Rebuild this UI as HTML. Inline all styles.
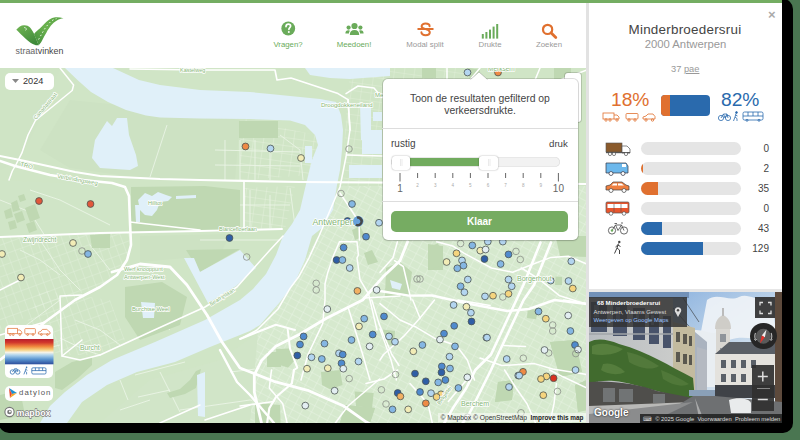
<!DOCTYPE html>
<html><head><meta charset="utf-8">
<style>
*{margin:0;padding:0;box-sizing:border-box}
html,body{width:800px;height:440px;overflow:hidden;background:#4a7651;font-family:"Liberation Sans",sans-serif}
#frame{position:absolute;left:-1px;top:-1px;width:794px;height:433.5px;background:#000;border-radius:10px}
#app{position:absolute;left:0;top:0;width:782px;height:423px;background:#fff;overflow:hidden}
#topbar{position:absolute;left:0;top:0;width:782px;height:3px;background:#74ad62}
#map{position:absolute;left:0;top:68px;width:587px;height:355px;background:#d5e7cd;overflow:hidden}
#map svg{position:absolute;left:0;top:0}
#header{position:absolute;left:0;top:3px;width:587px;height:65px;background:#fff}
.nav{position:absolute;text-align:center;font-size:7.8px;line-height:9px}
#panel{position:absolute;left:586px;top:3px;width:196px;height:420px;background:#fff;border-left:3px solid #e2e2e2}
.abs{position:absolute}
</style></head><body>
<div id="frame"></div>
<div id="app">
  <div id="map">
<svg width="587" height="355" viewBox="0 68 587 355">
<rect x="0" y="68" width="587" height="355" fill="#d0e5c6"/>
<path d="M0,68 L60,68 L40,120 L20,160 L0,170 Z" fill="#cfe4c5"/>
<path d="M70,100 L170,110 L240,120 L235,180 L140,178 L70,168 L40,150 Z" fill="#cde2c3"/>
<path d="M0,180 L120,186 L128,230 L0,236 Z" fill="#d0e5c7"/>
<path d="M140,236 L230,234 L220,255 L185,258 L140,262 Z" fill="#cde2c3"/>
<path d="M150,380 L220,360 L262,330 L300,330 L290,423 L100,423 Z" fill="#d1e5c8"/>
<path d="M30,190 L60,200 L90,215 L110,225" stroke="#eef6ea" stroke-width="0.8" fill="none"/>
<path d="M0,200 L30,212 L45,236" stroke="#eef6ea" stroke-width="0.8" fill="none"/>
<path d="M40,240 L60,270 L80,290" stroke="#eef6ea" stroke-width="0.8" fill="none"/>
<path d="M20,250 L40,260 L60,275" stroke="#eef6ea" stroke-width="0.8" fill="none"/>
<path d="M90,245 L110,270" stroke="#eef6ea" stroke-width="0.8" fill="none"/>
<path d="M60,300 L40,315 L20,330" stroke="#eef6ea" stroke-width="0.8" fill="none"/>
<path d="M167,125 L150,177" stroke="#eef6ea" stroke-width="0.8" fill="none"/>
<path d="M179,200 L180,230" stroke="#eef6ea" stroke-width="0.8" fill="none"/>
<path d="M225,140 L225,180" stroke="#eef6ea" stroke-width="0.8" fill="none"/>
<path d="M240,140 L240,180" stroke="#eef6ea" stroke-width="0.8" fill="none"/>
<path d="M255,140 L255,180" stroke="#eef6ea" stroke-width="0.8" fill="none"/>
<path d="M270,150 L270,180" stroke="#eef6ea" stroke-width="0.8" fill="none"/>
<path d="M215,150 L300,152" stroke="#eef6ea" stroke-width="0.8" fill="none"/>
<path d="M215,165 L300,166" stroke="#eef6ea" stroke-width="0.8" fill="none"/>
<path d="M280,135 L300,150 L303,180" stroke="#eef6ea" stroke-width="0.8" fill="none"/>
<path d="M200,240 L280,240" stroke="#eef6ea" stroke-width="0.8" fill="none"/>
<path d="M210,190 L210,228" stroke="#eef6ea" stroke-width="0.8" fill="none"/>
<path d="M230,190 L230,228" stroke="#eef6ea" stroke-width="0.8" fill="none"/>
<path d="M250,190 L250,228" stroke="#eef6ea" stroke-width="0.8" fill="none"/>
<path d="M270,195 L270,228" stroke="#eef6ea" stroke-width="0.8" fill="none"/>
<path d="M215,205 L290,205" stroke="#eef6ea" stroke-width="0.8" fill="none"/>
<path d="M290,188 L295,226" stroke="#eef6ea" stroke-width="0.8" fill="none"/>
<path d="M60,338 L85,350 L100,355" stroke="#eef6ea" stroke-width="0.8" fill="none"/>
<path d="M20,355 L60,345" stroke="#eef6ea" stroke-width="0.8" fill="none"/>
<path d="M75,320 L100,330 L120,345" stroke="#eef6ea" stroke-width="0.8" fill="none"/>
<path d="M170,330 L150,312" stroke="#eef6ea" stroke-width="0.8" fill="none"/>
<path d="M135,375 L185,362" stroke="#eef6ea" stroke-width="0.8" fill="none"/>
<path d="M138,397 L170,390" stroke="#eef6ea" stroke-width="0.8" fill="none"/>
<path d="M160,372 L180,412" stroke="#eef6ea" stroke-width="0.8" fill="none"/>
<path d="M120,380 L128,400" stroke="#eef6ea" stroke-width="0.8" fill="none"/>
<path d="M230,372 L290,365 L320,360" stroke="#eef6ea" stroke-width="0.8" fill="none"/>
<path d="M180,410 L250,400 L300,410" stroke="#eef6ea" stroke-width="0.8" fill="none"/>
<path d="M120,410 L150,400" stroke="#eef6ea" stroke-width="0.8" fill="none"/>
<path d="M300,410 L280,380 L260,395" stroke="#eef6ea" stroke-width="0.8" fill="none"/>
<defs><pattern id="g1" width="9" height="7" patternUnits="userSpaceOnUse" patternTransform="rotate(28)"><path d="M0,0 H9 M0,0 V7" stroke="#eaf4e4" stroke-width="0.9" fill="none"/></pattern><pattern id="g2" width="8" height="10" patternUnits="userSpaceOnUse" patternTransform="rotate(-20)"><path d="M0,0 H8 M0,0 V10" stroke="#eaf4e4" stroke-width="0.9" fill="none"/></pattern><pattern id="g3" width="10" height="8" patternUnits="userSpaceOnUse" patternTransform="rotate(8)"><path d="M0,0 H10 M0,0 V8" stroke="#e8f2e2" stroke-width="0.8" fill="none"/></pattern></defs>
<path d="M345,186 L587,186 L587,423 L250,423 L258,332 L280,302 L300,270 L318,236 L333,210 L340,186 Z" fill="#d6e9ce"/>
<path d="M345,186 L587,186 L587,423 L250,423 L258,332 L280,302 L300,270 L318,236 L333,210 L340,186 Z" fill="url(#g1)"/>
<path d="M240,118 L315,135 L318,145 L312,175 L240,180 Z" fill="url(#g3)"/>
<path d="M0,236 L130,232 L128,262 L100,287 L60,300 L0,330 Z" fill="url(#g2)" opacity="0.7"/>
<path d="M244,188 L295,186 L285,229 L244,231 Z" fill="url(#g3)"/>
<path d="M350,68 L470,68 L480,80 L382,80 L382,186 L343,186 L345,130 Z" fill="url(#g3)" opacity="0.8"/>
<path d="M40,290 L110,300 L125,340 L100,355 L60,355 L20,340 Z" fill="url(#g2)" opacity="0.7"/>
<path d="M239,121 L278,121 L278,138 L239,138 Z" fill="#bfd8b2"/>
<path d="M131,187 L205,186 L240,190 L240,232 L131,232 Z" fill="#bfd8b2"/>
<path d="M125,287 L162,282 L187,297 L180,325 L140,340 L125,317 Z" fill="#bfd8b2"/>
<path d="M186,250 L240,249 L200,272 Z" fill="#bfd8b2"/>
<path d="M167,393 L180,389 L190,380 L196,371 L201,369 L196,388 L185,394 L170,398 Z" fill="#bfd8b2"/>
<path d="M55,372 L72,362 L92,357 L92,365 L78,378 L62,390 L55,388 Z" fill="#bfd8b2"/>
<path d="M386,268 L400,262 L412,272 L409,296 L385,297 Z" fill="#bfd8b2"/>
<path d="M428,244 L443,246 L443,270 L428,270 Z" fill="#bfd8b2"/>
<path d="M550,342 L575,340 L582,372 L560,377 Z" fill="#bfd8b2"/>
<path d="M267,352 L281,352 L281,367 L267,367 Z" fill="#bfd8b2"/>
<path d="M255,405 L272,405 L270,423 L255,423 Z" fill="#bfd8b2"/>
<path d="M4,211 L11,208 L13,217 L6,219 Z" fill="#bfd8b2"/>
<path d="M11,203 L17,200 L20,210 L13,212 Z" fill="#bfd8b2"/>
<path d="M14,214 L22,211 L25,220 L17,223 Z" fill="#bfd8b2"/>
<path d="M25,208 L35,204 L40,218 L30,222 Z" fill="#bfd8b2"/>
<path d="M26,224 L34,221 L37,230 L29,233 Z" fill="#bfd8b2"/>
<path d="M8,222 L15,220 L17,228 L10,230 Z" fill="#bfd8b2"/>
<path d="M90,235 L110,234 L110,248 L92,248 Z" fill="#bfd8b2"/>
<path d="M18,196 L24,194 L26,200 L20,202 Z" fill="#bfd8b2"/>
<path d="M470,88 L500,85 L505,100 L480,105 Z" fill="#bfd8b2"/>
<path d="M540,85 L565,78 L580,90 L560,100 Z" fill="#bfd8b2"/>
<path d="M498,382 L514,380 L512,400 L495,402 Z" fill="#bfd8b2"/>
<path d="M345,405 L375,408 L370,423 L340,423 Z" fill="#bfd8b2"/>
<path d="M575,385 L587,380 L587,410 L578,412 Z" fill="#bfd8b2"/>
<path d="M422,68 L436,68 L436,78 L422,78 Z" fill="#bfd8b2"/>
<path d="M554,68 L571,68 L571,80 L554,80 Z" fill="#bfd8b2"/>
<path d="M468,68 L480,70 L478,80 L470,80 Z" fill="#bfd8b2"/>
<path d="M0,395 L20,390 L25,415 L0,420 Z" fill="#bfd8b2"/>
<path d="M384.4,289.8 L401.8,268 L408.3,294 Z" fill="#bfd8b2"/>
<path d="M428,247.6 L438,243.3 L444,260.7 L444,265 L428,270 Z" fill="#bfd8b2"/>
<path d="M555.5,236 L587,236 L587,257 L560,256 Z" fill="#bfd8b2"/>
<path d="M527.7,308.6 L538.4,310 L536,319.3 L527,318 Z" fill="#bfd8b2"/>
<path d="M555.5,276.6 L562,277 L562,285 L555,285 Z" fill="#bfd8b2"/>
<path d="M276,349 L290,348.6 L295,360 L288,367.7 L277,364 Z" fill="#bfd8b2"/>
<path d="M321,372 L340,370 L342.6,385 L330,389.2 L322,385 Z" fill="#bfd8b2"/>
<path d="M261.5,403.5 L280,405 L280.6,423 L261,423 Z" fill="#bfd8b2"/>
<path d="M354.6,391.6 L373.7,393 L372,408.3 L356,406 Z" fill="#bfd8b2"/>
<path d="M383,329.5 L395,331 L394,346 L384,344 Z" fill="#bfd8b2"/>
<path d="M550,342 L575,340 L582,372 L560,377 Z" fill="#bfd8b2"/>
<path d="M345,405 L375,408 L370,423 L340,423 Z" fill="#bfd8b2"/>
<path d="M498,382 L514,380 L512,400 L495,402 Z" fill="#bfd8b2"/>
<path d="M575,385 L587,380 L587,410 L578,412 Z" fill="#bfd8b2"/>
<path d="M422,68 L436,68 L436,78 L422,78 Z" fill="#bfd8b2"/>
<path d="M554,68 L571,68 L571,80 L554,80 Z" fill="#bfd8b2"/>
<path d="M468,68 L480,70 L478,80 L470,80 Z" fill="#bfd8b2"/>
<path d="M352,230 L360,226 L365,236 L355,240 Z" fill="#bfd8b2"/>
<path d="M364,253 L372,250 L378,262 L368,265 Z" fill="#bfd8b2"/>
<path d="M113,68 L126,74 L139,80 L160,85 L200,90 L250,92 L270,94 L290,96 L320,99 L336,102 L341,115 L343,130 L342,150 L340,170 L337,185 L333,210 L322,228 L312,236 L305,260 L295,282 L280,302 L260,325 L250,331 L210,347 L175,362 L137,372 L107,385 L82,402 L67,423 L40,423 L50,406 L65,392 L87,375 L112,360 L155,342 L205,320 L240,300 L253,289 L266,274 L276,255 L283,236 L292,224 L300,210 L307,180 L312,160 L318,145 L315,135 L305,125 L290,120.5 L250,119 L200,118.5 L160,117.5 L146,115.5 L126,110 L108,102 L91,92 L77.5,80 L65,68 Z" fill="#e0f0f9"/>
<path d="M107,121 L112,126 L117,118 L127,118 L129,135 L136,155 L138,166 L130,170 L100,168 L92,158 L95,140 L100,132 Z" fill="#e0f0f9"/>
<path d="M184,258 L194,258 L200,272 L240,250 L256,268 L236,286 L208,303 Z" fill="#e0f0f9"/>
<path d="M305,68 L390,68 L390,76 L350,79 L330,78 L310,75 Z" fill="#e0f0f9"/>
<path d="M305,146 L312,146 L312,163 L305,163 Z" fill="#e0f0f9"/>
<path d="M360,104 L371,104 L371,140 L361,140 Z" fill="#e0f0f9"/>
<path d="M373,112 L382,112 L382,121 L373,121 Z" fill="#e0f0f9"/>
<path d="M362,130 L382,130 L382,154 L362,154 Z" fill="#e0f0f9"/>
<path d="M349,165 L382,165 L382,178 L349,178 Z" fill="#e0f0f9"/>
<path d="M138,200 L145,193 L152,196 L158,192 L166,195 L172,197 L168,201 L160,202 L157,210 L152,216 L145,215 L140,210 Z" fill="#e0f0f9"/>
<path d="M176,196 L196,195 L196,198 L176,199 Z" fill="#e0f0f9"/>
<path d="M135,205 L140,205 L140,222 L136,222 Z" fill="#e0f0f9"/>
<path d="M141,302 L155,303 L154,318 L143,318 Z" fill="#e0f0f9"/>
<path d="M197,375 L205,372 L205,417 L198,416 Z" fill="#e0f0f9"/>
<path d="M390,280 L402,284 L400,290 L392,288 Z" fill="#e0f0f9"/>
<path d="M60,68 L73.6,85 L72.2,90.5 L35.4,120.5 L28,135 L21.8,153.2 L16.3,164 L12.3,171 L9,180" stroke="#ffffff" stroke-width="1.5" fill="none" stroke-linejoin="round" stroke-linecap="round"/>
<path d="M100,355 L150,332 L205,307 L237,287 L270,250 L283,236" stroke="#ffffff" stroke-width="1.5" fill="none" stroke-linejoin="round" stroke-linecap="round"/>
<path d="M100,355 L80,360 L62,356 L60,296 L82,295" stroke="#ffffff" stroke-width="1.5" fill="none" stroke-linejoin="round" stroke-linecap="round"/>
<path d="M62,356 L82,340" stroke="#ffffff" stroke-width="1.5" fill="none" stroke-linejoin="round" stroke-linecap="round"/>
<path d="M0,335 L45,322" stroke="#ffffff" stroke-width="1.5" fill="none" stroke-linejoin="round" stroke-linecap="round"/>
<path d="M348,99.6 L350,130 L346,157 L340,187 L325,222 L319,236 L309,257.8 L298.7,276.8 L290,288.4 L278,309 L257,330 L240,339" stroke="#ffffff" stroke-width="1.5" fill="none" stroke-linejoin="round" stroke-linecap="round"/>
<path d="M347,155 L382,156" stroke="#ffffff" stroke-width="1.5" fill="none" stroke-linejoin="round" stroke-linecap="round"/>
<path d="M346,93.6 L358,86 L374,88 L382,97.6" stroke="#ffffff" stroke-width="1.5" fill="none" stroke-linejoin="round" stroke-linecap="round"/>
<path d="M339.5,241.8 L357,241.8 L358.4,255 L357,257.8 L360,279.7 L368.6,294.2 L377,330" stroke="#ffffff" stroke-width="1.5" fill="none" stroke-linejoin="round" stroke-linecap="round"/>
<path d="M339.5,241.8 L333.7,255 L327.8,272.4 L325,284 L325,300 L322.7,323.6 L308,354.5 L301,380" stroke="#ffffff" stroke-width="1.5" fill="none" stroke-linejoin="round" stroke-linecap="round"/>
<path d="M364,298 L400,296" stroke="#ffffff" stroke-width="1.5" fill="none" stroke-linejoin="round" stroke-linecap="round"/>
<path d="M397.4,241.8 L393,257.8 L380,272.3" stroke="#ffffff" stroke-width="1.5" fill="none" stroke-linejoin="round" stroke-linecap="round"/>
<path d="M394.5,260.7 L403.3,266.5 L409,291 L411,300" stroke="#ffffff" stroke-width="1.5" fill="none" stroke-linejoin="round" stroke-linecap="round"/>
<path d="M436.7,241.8 L452.7,246 L464.3,253.4 L491.4,268 L512.7,272.3 L534,263.8 L551,257.4 L568.3,256.3 L587,264" stroke="#ffffff" stroke-width="1.5" fill="none" stroke-linejoin="round" stroke-linecap="round"/>
<path d="M521.3,268 L538.4,278.7 L559.7,295.8 L587,304.4" stroke="#ffffff" stroke-width="1.5" fill="none" stroke-linejoin="round" stroke-linecap="round"/>
<path d="M340,193 L350,208 L359,222 L359.5,240" stroke="#ffffff" stroke-width="1.5" fill="none" stroke-linejoin="round" stroke-linecap="round"/>
<path d="M480,68 L470,80" stroke="#ffffff" stroke-width="1.5" fill="none" stroke-linejoin="round" stroke-linecap="round"/>
<path d="M540,68 L535,80" stroke="#ffffff" stroke-width="1.5" fill="none" stroke-linejoin="round" stroke-linecap="round"/>
<path d="M447,68 L447,80" stroke="#ffffff" stroke-width="1.5" fill="none" stroke-linejoin="round" stroke-linecap="round"/>
<path d="M560,80 L587,70" stroke="#ffffff" stroke-width="1.5" fill="none" stroke-linejoin="round" stroke-linecap="round"/>
<path d="M205,420 L250,405" stroke="#ffffff" stroke-width="1.5" fill="none" stroke-linejoin="round" stroke-linecap="round"/>
<path d="M160,423 L200,405" stroke="#ffffff" stroke-width="1.5" fill="none" stroke-linejoin="round" stroke-linecap="round"/>
<path d="M0,290 L20,280" stroke="#ffffff" stroke-width="1.5" fill="none" stroke-linejoin="round" stroke-linecap="round"/>
<path d="M380,303.6 L400,320 L416.4,327.3 L434.5,338.2 L456.4,345.5 L467.3,360 L474.5,380" stroke="#ffffff" stroke-width="1.5" fill="none" stroke-linejoin="round" stroke-linecap="round"/>
<path d="M412.7,300 L420,318 L434.5,300" stroke="#ffffff" stroke-width="1.5" fill="none" stroke-linejoin="round" stroke-linecap="round"/>
<path d="M420,318 L403.6,336.4 L383.6,354.5 L380,360" stroke="#ffffff" stroke-width="1.5" fill="none" stroke-linejoin="round" stroke-linecap="round"/>
<path d="M380,329 L391,360 L396.4,380" stroke="#ffffff" stroke-width="1.5" fill="none" stroke-linejoin="round" stroke-linecap="round"/>
<path d="M458,300 L490,305.5" stroke="#ffffff" stroke-width="1.5" fill="none" stroke-linejoin="round" stroke-linecap="round"/>
<path d="M480,358 L501.8,365.5 L534.5,363.6 L552.7,369 L587,374.5" stroke="#ffffff" stroke-width="1.5" fill="none" stroke-linejoin="round" stroke-linecap="round"/>
<path d="M503.6,345.5 L525.5,346.4" stroke="#ffffff" stroke-width="1.5" fill="none" stroke-linejoin="round" stroke-linecap="round"/>
<path d="M563.6,300 L587,303.6" stroke="#ffffff" stroke-width="1.5" fill="none" stroke-linejoin="round" stroke-linecap="round"/>
<path d="M504.6,370 L516,388 L527,403.8 L536,424" stroke="#ffffff" stroke-width="1.5" fill="none" stroke-linejoin="round" stroke-linecap="round"/>
<path d="M410,383.5 L428,403.8 L432.5,424" stroke="#ffffff" stroke-width="1.5" fill="none" stroke-linejoin="round" stroke-linecap="round"/>
<path d="M549.6,370 L563,376.8 L587,388" stroke="#ffffff" stroke-width="1.5" fill="none" stroke-linejoin="round" stroke-linecap="round"/>
<path d="M556.4,383.5 L554,403.8 L549.6,424" stroke="#ffffff" stroke-width="1.5" fill="none" stroke-linejoin="round" stroke-linecap="round"/>
<path d="M467.4,379 L448.3,401.5" stroke="#ffffff" stroke-width="1.5" fill="none" stroke-linejoin="round" stroke-linecap="round"/>
<path d="M348,307 L362.7,354.5 L370,380" stroke="#ffffff" stroke-width="1.5" fill="none" stroke-linejoin="round" stroke-linecap="round"/>
<path d="M371.8,300 L379,323.6 L391.8,354.5 L399,365.5" stroke="#ffffff" stroke-width="1.5" fill="none" stroke-linejoin="round" stroke-linecap="round"/>
<path d="M379.6,379 L348,406 L334.6,424" stroke="#ffffff" stroke-width="1.5" fill="none" stroke-linejoin="round" stroke-linecap="round"/>
<path d="M366,383.5 L384,379 L397.7,370" stroke="#ffffff" stroke-width="1.5" fill="none" stroke-linejoin="round" stroke-linecap="round"/>
<path d="M240,406 L273.8,401.5" stroke="#ffffff" stroke-width="1.5" fill="none" stroke-linejoin="round" stroke-linecap="round"/>
<path d="M271.5,370 L269.3,388 L282.8,403.8 L287.3,424" stroke="#ffffff" stroke-width="1.5" fill="none" stroke-linejoin="round" stroke-linecap="round"/>
<path d="M0,156 L25,161 L75,172 L100,176 L160,179 L200,180 L300,182 L587,184" stroke="#ffffff" stroke-width="2.2" fill="none" stroke-linejoin="round" stroke-linecap="round"/>
<path d="M0,161 L15,166 L50,175 L82,180 L112,183 L125,187 L129,196 L130,222 L131,245 L127,260 L117,275 L100,287 L75,300 L45,322 L30,335 L10,352 L0,360" stroke="#ffffff" stroke-width="2.6" fill="none" stroke-linejoin="round" stroke-linecap="round"/>
<path d="M0,237 L100,233 L200,231 L282,229" stroke="#ffffff" stroke-width="2.0" fill="none" stroke-linejoin="round" stroke-linecap="round"/>
<path d="M112,272 L140,264 L170,267 L187,285 L207,315 L222,342 L240,368 L273.8,381.3 L307.6,390.3 L343.6,406 L366,421.8 L370,424" stroke="#ffffff" stroke-width="2.8" fill="none" stroke-linejoin="round" stroke-linecap="round"/>
<path d="M240,339 L275.8,324.8 L295,330" stroke="#ffffff" stroke-width="2.0" fill="none" stroke-linejoin="round" stroke-linecap="round"/>
<path d="M261.5,423 L254.3,392 L254.3,374.9 L261.5,360.6 L275.8,346.3 L299.7,334.3 L326.4,318.2 L362.7,300 L383,276.8 L400,260.7 L407.6,241.8" stroke="#ffffff" stroke-width="2.8" fill="none" stroke-linejoin="round" stroke-linecap="round"/>
<path d="M294,370 L291.8,383.5 L276,397 L269.3,408.3 L267,424" stroke="#ffffff" stroke-width="2.2" fill="none" stroke-linejoin="round" stroke-linecap="round"/>
<path d="M287.7,329.5 L290,348.6 L297.3,367.7 L294,370" stroke="#ffffff" stroke-width="2.0" fill="none" stroke-linejoin="round" stroke-linecap="round"/>
<path d="M380,291 L409,295.6 L432,295.5 L470,304 L507.3,311 L529,309 L554.5,300 L587,304" stroke="#ffffff" stroke-width="2.4" fill="none" stroke-linejoin="round" stroke-linecap="round"/>
<path d="M540.5,242.4 L523.4,285 L516.4,300 L491,354.5 L475.3,370 L466.3,388 L452.8,408.3 L443.8,424" stroke="#ffffff" stroke-width="2.6" fill="none" stroke-linejoin="round" stroke-linecap="round"/>
<path d="M551,242.4 L534,285 L523.6,300 L498,354.5 L491,370 L477.6,397 L468.6,415 L462,424" stroke="#ffffff" stroke-width="2.6" fill="none" stroke-linejoin="round" stroke-linecap="round"/>
<path d="M130,222 L200,230" stroke="#ffffff" stroke-width="1.6" fill="none" stroke-linejoin="round" stroke-linecap="round"/>
<path d="M244,181 L244,231" stroke="#ffffff" stroke-width="1.6" fill="none" stroke-linejoin="round" stroke-linecap="round"/>
<path d="M220,350 L237,382 L250,395 L274,423" stroke="#ffffff" stroke-width="2.4" fill="none" stroke-linejoin="round" stroke-linecap="round"/>
<path d="M130,69 L200,70 L275,70 L277,80 L291,78 L338,93.6 L348,99.6 L350,130" stroke="#ffffff" stroke-width="1.6" fill="none" stroke-linejoin="round" stroke-linecap="round"/>
<circle cx="39" cy="201" r="3.4" fill="#e2573a" stroke="#4d5553" stroke-width="0.8"/>
<circle cx="90.5" cy="204" r="3.4" fill="#e2573a" stroke="#4d5553" stroke-width="0.8"/>
<circle cx="73" cy="243" r="3.4" fill="#f2ecb6" stroke="#4d5553" stroke-width="0.8"/>
<circle cx="82" cy="251" r="3.3" fill="none" stroke="#8a8f88" stroke-width="0.8"/>
<circle cx="88" cy="254" r="3.4" fill="#84b6e3" stroke="#4d5553" stroke-width="0.8"/>
<circle cx="2" cy="254" r="3.4" fill="#f2ecb6" stroke="#4d5553" stroke-width="0.8"/>
<circle cx="21" cy="277.5" r="3.4" fill="#f2ecb6" stroke="#4d5553" stroke-width="0.8"/>
<circle cx="245.5" cy="146.5" r="3.4" fill="#ee8a45" stroke="#4d5553" stroke-width="0.8"/>
<circle cx="270.5" cy="148.5" r="3.4" fill="#b3d5f0" stroke="#4d5553" stroke-width="0.8"/>
<circle cx="301" cy="158" r="3.4" fill="#f2ecb6" stroke="#4d5553" stroke-width="0.8"/>
<circle cx="349" cy="149" r="3.3" fill="none" stroke="#8a8f88" stroke-width="0.8"/>
<circle cx="229.5" cy="238" r="3.4" fill="#2f5ea6" stroke="#4d5553" stroke-width="0.8"/>
<circle cx="246.7" cy="257" r="3.3" fill="none" stroke="#8a8f88" stroke-width="0.8"/>
<circle cx="467.5" cy="72.5" r="3.4" fill="#b3d5f0" stroke="#4d5553" stroke-width="0.8"/>
<circle cx="498" cy="72.5" r="3.4" fill="#ee8a45" stroke="#4d5553" stroke-width="0.8"/>
<circle cx="341" cy="193.5" r="3.3" fill="none" stroke="#8a8f88" stroke-width="0.8"/>
<circle cx="352" cy="204" r="3.4" fill="#84b6e3" stroke="#4d5553" stroke-width="0.8"/>
<circle cx="347.5" cy="221" r="3.4" fill="#2f5ea6" stroke="#4d5553" stroke-width="0.8"/>
<circle cx="379" cy="222.75" r="3.4" fill="#b3d5f0" stroke="#4d5553" stroke-width="0.8"/>
<circle cx="366" cy="236.7" r="3.4" fill="#4f8ace" stroke="#4d5553" stroke-width="0.8"/>
<circle cx="343.6" cy="247.6" r="3.4" fill="#4f8ace" stroke="#4d5553" stroke-width="0.8"/>
<circle cx="336.6" cy="260" r="3.4" fill="#2f5ea6" stroke="#4d5553" stroke-width="0.8"/>
<circle cx="342.4" cy="260" r="3.4" fill="#84b6e3" stroke="#4d5553" stroke-width="0.8"/>
<circle cx="349.7" cy="268" r="3.4" fill="#b3d5f0" stroke="#4d5553" stroke-width="0.8"/>
<circle cx="357.4" cy="290.9" r="3.4" fill="#f2b062" stroke="#4d5553" stroke-width="0.8"/>
<circle cx="376.6" cy="289.9" r="3.4" fill="#e3eef2" stroke="#4d5553" stroke-width="0.8"/>
<circle cx="316.2" cy="283.3" r="3.3" fill="none" stroke="#8a8f88" stroke-width="0.8"/>
<circle cx="316.2" cy="290" r="3.3" fill="none" stroke="#8a8f88" stroke-width="0.8"/>
<circle cx="460.6" cy="243.5" r="3.3" fill="none" stroke="#8a8f88" stroke-width="0.8"/>
<circle cx="472.3" cy="245.4" r="3.4" fill="#84b6e3" stroke="#4d5553" stroke-width="0.8"/>
<circle cx="487.8" cy="241.6" r="3.4" fill="#b3d5f0" stroke="#4d5553" stroke-width="0.8"/>
<circle cx="502.8" cy="241.6" r="3.4" fill="#b3d5f0" stroke="#4d5553" stroke-width="0.8"/>
<circle cx="456.5" cy="253.3" r="3.4" fill="#f5d47e" stroke="#4d5553" stroke-width="0.8"/>
<circle cx="480.3" cy="250.6" r="3.4" fill="#f2ecb6" stroke="#4d5553" stroke-width="0.8"/>
<circle cx="485.6" cy="249.5" r="3.4" fill="#e3eef2" stroke="#4d5553" stroke-width="0.8"/>
<circle cx="508.5" cy="254.4" r="3.4" fill="#4f8ace" stroke="#4d5553" stroke-width="0.8"/>
<circle cx="516" cy="251.4" r="3.3" fill="none" stroke="#8a8f88" stroke-width="0.8"/>
<circle cx="520.3" cy="259.5" r="3.3" fill="none" stroke="#8a8f88" stroke-width="0.8"/>
<circle cx="484.5" cy="259" r="3.4" fill="#2f5ea6" stroke="#4d5553" stroke-width="0.8"/>
<circle cx="446.6" cy="262" r="3.4" fill="#f2ecb6" stroke="#4d5553" stroke-width="0.8"/>
<circle cx="462" cy="260.4" r="3.4" fill="#b3d5f0" stroke="#4d5553" stroke-width="0.8"/>
<circle cx="463.5" cy="265.6" r="3.4" fill="#84b6e3" stroke="#4d5553" stroke-width="0.8"/>
<circle cx="457.3" cy="268.3" r="3.4" fill="#84b6e3" stroke="#4d5553" stroke-width="0.8"/>
<circle cx="500.6" cy="264" r="3.4" fill="#84b6e3" stroke="#4d5553" stroke-width="0.8"/>
<circle cx="571.3" cy="261.3" r="3.4" fill="#b3d5f0" stroke="#4d5553" stroke-width="0.8"/>
<circle cx="467.8" cy="279.5" r="3.4" fill="#b3d5f0" stroke="#4d5553" stroke-width="0.8"/>
<circle cx="460.6" cy="286.3" r="3.4" fill="#84b6e3" stroke="#4d5553" stroke-width="0.8"/>
<circle cx="464.4" cy="292.3" r="3.4" fill="#b3d5f0" stroke="#4d5553" stroke-width="0.8"/>
<circle cx="508.5" cy="279.5" r="3.4" fill="#b3d5f0" stroke="#4d5553" stroke-width="0.8"/>
<circle cx="511.7" cy="286.3" r="3.4" fill="#b3d5f0" stroke="#4d5553" stroke-width="0.8"/>
<circle cx="485" cy="296.4" r="3.4" fill="#b3d5f0" stroke="#4d5553" stroke-width="0.8"/>
<circle cx="493" cy="295.7" r="3.4" fill="#f5d47e" stroke="#4d5553" stroke-width="0.8"/>
<circle cx="508.5" cy="293.8" r="3.4" fill="#f5d47e" stroke="#4d5553" stroke-width="0.8"/>
<circle cx="502.8" cy="297" r="3.3" fill="none" stroke="#8a8f88" stroke-width="0.8"/>
<circle cx="550.7" cy="280.6" r="3.4" fill="#b3d5f0" stroke="#4d5553" stroke-width="0.8"/>
<circle cx="568.5" cy="281" r="3.4" fill="#b3d5f0" stroke="#4d5553" stroke-width="0.8"/>
<circle cx="572.8" cy="288.5" r="3.4" fill="#f5d47e" stroke="#4d5553" stroke-width="0.8"/>
<circle cx="417" cy="279" r="3.3" fill="none" stroke="#8a8f88" stroke-width="0.8"/>
<circle cx="420" cy="279" r="3.3" fill="none" stroke="#8a8f88" stroke-width="0.8"/>
<circle cx="327.3" cy="309.1" r="3.4" fill="#e3eef2" stroke="#4d5553" stroke-width="0.8"/>
<circle cx="364.2" cy="318.7" r="3.4" fill="#84b6e3" stroke="#4d5553" stroke-width="0.8"/>
<circle cx="384" cy="316.4" r="3.4" fill="#4f8ace" stroke="#4d5553" stroke-width="0.8"/>
<circle cx="359" cy="326.4" r="3.4" fill="#f2ecb6" stroke="#4d5553" stroke-width="0.8"/>
<circle cx="372.7" cy="334.5" r="3.4" fill="#4f8ace" stroke="#4d5553" stroke-width="0.8"/>
<circle cx="389" cy="336.4" r="3.4" fill="#b3d5f0" stroke="#4d5553" stroke-width="0.8"/>
<circle cx="395" cy="341.8" r="3.4" fill="#b3d5f0" stroke="#4d5553" stroke-width="0.8"/>
<circle cx="369.6" cy="346.4" r="3.4" fill="#e3eef2" stroke="#4d5553" stroke-width="0.8"/>
<circle cx="351.5" cy="340" r="3.4" fill="#84b6e3" stroke="#4d5553" stroke-width="0.8"/>
<circle cx="303.6" cy="336.4" r="3.4" fill="#4f8ace" stroke="#4d5553" stroke-width="0.8"/>
<circle cx="300" cy="344.5" r="3.4" fill="#4f8ace" stroke="#4d5553" stroke-width="0.8"/>
<circle cx="297.3" cy="355.5" r="3.4" fill="#2f5ea6" stroke="#4d5553" stroke-width="0.8"/>
<circle cx="311.5" cy="357.3" r="3.4" fill="#b3d5f0" stroke="#4d5553" stroke-width="0.8"/>
<circle cx="321.8" cy="359" r="3.4" fill="#84b6e3" stroke="#4d5553" stroke-width="0.8"/>
<circle cx="324.5" cy="343.6" r="3.4" fill="#84b6e3" stroke="#4d5553" stroke-width="0.8"/>
<circle cx="339" cy="353.3" r="3.4" fill="#b3d5f0" stroke="#4d5553" stroke-width="0.8"/>
<circle cx="342.7" cy="354.5" r="3.4" fill="#4f8ace" stroke="#4d5553" stroke-width="0.8"/>
<circle cx="341.5" cy="363.3" r="3.4" fill="#4f8ace" stroke="#4d5553" stroke-width="0.8"/>
<circle cx="343.3" cy="368.7" r="3.4" fill="#e3eef2" stroke="#4d5553" stroke-width="0.8"/>
<circle cx="327.8" cy="368.2" r="3.4" fill="#f2ecb6" stroke="#4d5553" stroke-width="0.8"/>
<circle cx="307" cy="368.7" r="3.4" fill="#f2ecb6" stroke="#4d5553" stroke-width="0.8"/>
<circle cx="358.5" cy="361.5" r="3.4" fill="#b3d5f0" stroke="#4d5553" stroke-width="0.8"/>
<circle cx="395.5" cy="374.5" r="3.3" fill="none" stroke="#8a8f88" stroke-width="0.8"/>
<circle cx="453.6" cy="305" r="3.4" fill="#b3d5f0" stroke="#4d5553" stroke-width="0.8"/>
<circle cx="466.4" cy="306.7" r="3.4" fill="#f2ecb6" stroke="#4d5553" stroke-width="0.8"/>
<circle cx="470.9" cy="312.7" r="3.4" fill="#b3d5f0" stroke="#4d5553" stroke-width="0.8"/>
<circle cx="471.5" cy="321.5" r="3.4" fill="#2f5ea6" stroke="#4d5553" stroke-width="0.8"/>
<circle cx="454.2" cy="325.8" r="3.4" fill="#4f8ace" stroke="#4d5553" stroke-width="0.8"/>
<circle cx="444" cy="333.6" r="3.4" fill="#4f8ace" stroke="#4d5553" stroke-width="0.8"/>
<circle cx="440" cy="339.6" r="3.4" fill="#e3eef2" stroke="#4d5553" stroke-width="0.8"/>
<circle cx="486.4" cy="337.6" r="3.4" fill="#b3d5f0" stroke="#4d5553" stroke-width="0.8"/>
<circle cx="422.4" cy="345" r="3.4" fill="#84b6e3" stroke="#4d5553" stroke-width="0.8"/>
<circle cx="413.3" cy="351.3" r="3.4" fill="#f2ecb6" stroke="#4d5553" stroke-width="0.8"/>
<circle cx="455" cy="346.4" r="3.4" fill="#84b6e3" stroke="#4d5553" stroke-width="0.8"/>
<circle cx="449.5" cy="356.7" r="3.4" fill="#b3d5f0" stroke="#4d5553" stroke-width="0.8"/>
<circle cx="441.8" cy="366.4" r="3.4" fill="#4f8ace" stroke="#4d5553" stroke-width="0.8"/>
<circle cx="450" cy="368.5" r="3.4" fill="#84b6e3" stroke="#4d5553" stroke-width="0.8"/>
<circle cx="441.5" cy="372.4" r="3.4" fill="#2f5ea6" stroke="#4d5553" stroke-width="0.8"/>
<circle cx="415" cy="373.6" r="3.4" fill="#2f5ea6" stroke="#4d5553" stroke-width="0.8"/>
<circle cx="467.3" cy="377.3" r="3.4" fill="#e3eef2" stroke="#4d5553" stroke-width="0.8"/>
<circle cx="538.5" cy="311.5" r="3.4" fill="#84b6e3" stroke="#4d5553" stroke-width="0.8"/>
<circle cx="545.8" cy="318.7" r="3.4" fill="#f5d47e" stroke="#4d5553" stroke-width="0.8"/>
<circle cx="552.7" cy="325" r="3.3" fill="none" stroke="#8a8f88" stroke-width="0.8"/>
<circle cx="552.7" cy="331" r="3.3" fill="none" stroke="#8a8f88" stroke-width="0.8"/>
<circle cx="568.2" cy="315.5" r="3.4" fill="#e3eef2" stroke="#4d5553" stroke-width="0.8"/>
<circle cx="570.4" cy="331" r="3.4" fill="#84b6e3" stroke="#4d5553" stroke-width="0.8"/>
<circle cx="575" cy="345" r="3.4" fill="#4f8ace" stroke="#4d5553" stroke-width="0.8"/>
<circle cx="578" cy="349.6" r="3.4" fill="#e3eef2" stroke="#4d5553" stroke-width="0.8"/>
<circle cx="575.8" cy="353.6" r="3.3" fill="none" stroke="#8a8f88" stroke-width="0.8"/>
<circle cx="548.7" cy="353" r="3.3" fill="none" stroke="#8a8f88" stroke-width="0.8"/>
<circle cx="544.5" cy="350" r="3.4" fill="#e3eef2" stroke="#4d5553" stroke-width="0.8"/>
<circle cx="487" cy="337.6" r="3.4" fill="#b3d5f0" stroke="#4d5553" stroke-width="0.8"/>
<circle cx="506.7" cy="359" r="3.4" fill="#b3d5f0" stroke="#4d5553" stroke-width="0.8"/>
<circle cx="523.3" cy="358.2" r="3.3" fill="none" stroke="#8a8f88" stroke-width="0.8"/>
<circle cx="523" cy="371.8" r="3.4" fill="#ee8a45" stroke="#4d5553" stroke-width="0.8"/>
<circle cx="518.2" cy="375.5" r="3.4" fill="#b3d5f0" stroke="#4d5553" stroke-width="0.8"/>
<circle cx="575.5" cy="370" r="3.4" fill="#b3d5f0" stroke="#4d5553" stroke-width="0.8"/>
<circle cx="546.4" cy="376.4" r="3.4" fill="#f5d47e" stroke="#4d5553" stroke-width="0.8"/>
<circle cx="541" cy="379" r="3.4" fill="#f5d47e" stroke="#4d5553" stroke-width="0.8"/>
<circle cx="553.6" cy="378.2" r="3.4" fill="#d8321f" stroke="#4d5553" stroke-width="0.8"/>
<circle cx="334.6" cy="390.7" r="3.4" fill="#e3eef2" stroke="#4d5553" stroke-width="0.8"/>
<circle cx="305.3" cy="405.6" r="3.4" fill="#e3eef2" stroke="#4d5553" stroke-width="0.8"/>
<circle cx="349.2" cy="378.6" r="3.3" fill="none" stroke="#8a8f88" stroke-width="0.8"/>
<circle cx="381.4" cy="389.8" r="3.3" fill="none" stroke="#8a8f88" stroke-width="0.8"/>
<circle cx="386" cy="404" r="3.3" fill="none" stroke="#8a8f88" stroke-width="0.8"/>
<circle cx="397.7" cy="393" r="3.4" fill="#2f5ea6" stroke="#4d5553" stroke-width="0.8"/>
<circle cx="400.4" cy="396.4" r="3.4" fill="#f2b062" stroke="#4d5553" stroke-width="0.8"/>
<circle cx="392.5" cy="409.4" r="3.4" fill="#84b6e3" stroke="#4d5553" stroke-width="0.8"/>
<circle cx="408.2" cy="409.4" r="3.4" fill="#f2ecb6" stroke="#4d5553" stroke-width="0.8"/>
<circle cx="438.2" cy="382.4" r="3.4" fill="#84b6e3" stroke="#4d5553" stroke-width="0.8"/>
<circle cx="445.4" cy="380" r="3.4" fill="#4f8ace" stroke="#4d5553" stroke-width="0.8"/>
<circle cx="425.8" cy="381.3" r="3.4" fill="#2f5ea6" stroke="#4d5553" stroke-width="0.8"/>
<circle cx="458.4" cy="388" r="3.4" fill="#84b6e3" stroke="#4d5553" stroke-width="0.8"/>
<circle cx="420" cy="392" r="3.4" fill="#4f8ace" stroke="#4d5553" stroke-width="0.8"/>
<circle cx="431" cy="393.2" r="3.4" fill="#b3d5f0" stroke="#4d5553" stroke-width="0.8"/>
<circle cx="441" cy="394.3" r="3.4" fill="#f5d47e" stroke="#4d5553" stroke-width="0.8"/>
<circle cx="436.6" cy="397" r="3.4" fill="#f5d47e" stroke="#4d5553" stroke-width="0.8"/>
<circle cx="425.8" cy="403.3" r="3.4" fill="#ee8a45" stroke="#4d5553" stroke-width="0.8"/>
<circle cx="509" cy="387" r="3.4" fill="#b3d5f0" stroke="#4d5553" stroke-width="0.8"/>
<circle cx="519.2" cy="375.6" r="3.4" fill="#b3d5f0" stroke="#4d5553" stroke-width="0.8"/>
<circle cx="543.3" cy="395.2" r="3.4" fill="#f5d47e" stroke="#4d5553" stroke-width="0.8"/>
<circle cx="557.5" cy="391.4" r="3.3" fill="none" stroke="#8a8f88" stroke-width="0.8"/>
<circle cx="521" cy="412.8" r="3.3" fill="none" stroke="#8a8f88" stroke-width="0.8"/>
<circle cx="467.4" cy="417.3" r="3.3" fill="none" stroke="#8a8f88" stroke-width="0.8"/>
<text x="180" y="71.5" font-family="Liberation Sans" font-size="5.5" fill="#84b574" stroke="#fff" stroke-width="1.6" paint-order="stroke" stroke-linejoin="round" text-anchor="start">Kastelweg</text>
<text x="36" y="120" font-family="Liberation Sans" font-size="5.5" fill="#84b574" stroke="#fff" stroke-width="1.6" paint-order="stroke" stroke-linejoin="round" text-anchor="start" transform="rotate(-50 36 120)">Canadastraat</text>
<text x="20" y="166" font-family="Liberation Sans" font-size="6" fill="#84b574" stroke="#fff" stroke-width="1.6" paint-order="stroke" stroke-linejoin="round" text-anchor="start" transform="rotate(14 20 166)">TRO</text>
<text x="57" y="178" font-family="Liberation Sans" font-size="5.8" fill="#84b574" stroke="#fff" stroke-width="1.6" paint-order="stroke" stroke-linejoin="round" text-anchor="start" transform="rotate(10 57 178)">Verbindingsweg</text>
<text x="321" y="107" font-family="Liberation Sans" font-size="6" fill="#84b574" stroke="#fff" stroke-width="1.6" paint-order="stroke" stroke-linejoin="round" text-anchor="start">Droogdokkeneiland</text>
<text x="375" y="97" font-family="Liberation Sans" font-size="6" fill="#84b574" stroke="#fff" stroke-width="1.6" paint-order="stroke" stroke-linejoin="round" text-anchor="start">Me</text>
<text x="488" y="71" font-family="Liberation Sans" font-size="6.5" fill="#84b574" stroke="#fff" stroke-width="1.6" paint-order="stroke" stroke-linejoin="round" text-anchor="start">Merksem</text>
<text x="148" y="205" font-family="Liberation Sans" font-size="5.5" fill="#84b574" stroke="#fff" stroke-width="1.6" paint-order="stroke" stroke-linejoin="round" text-anchor="start">Hilltot</text>
<text x="219" y="231" font-family="Liberation Sans" font-size="5.5" fill="#84b574" stroke="#fff" stroke-width="1.6" paint-order="stroke" stroke-linejoin="round" text-anchor="start">Blancefloerlaan</text>
<text x="23" y="242" font-family="Liberation Sans" font-size="6.5" fill="#84b574" stroke="#fff" stroke-width="1.6" paint-order="stroke" stroke-linejoin="round" text-anchor="start">Zwijndrecht</text>
<text x="124" y="271" font-family="Liberation Sans" font-size="5.5" fill="#84b574" stroke="#fff" stroke-width="1.6" paint-order="stroke" stroke-linejoin="round" text-anchor="start">Werf knooppunt</text>
<text x="124" y="279" font-family="Liberation Sans" font-size="5.5" fill="#84b574" stroke="#fff" stroke-width="1.6" paint-order="stroke" stroke-linejoin="round" text-anchor="start">Antwerpen-West</text>
<text x="132" y="311" font-family="Liberation Sans" font-size="5.8" fill="#84b574" stroke="#fff" stroke-width="1.6" paint-order="stroke" stroke-linejoin="round" text-anchor="start">Burchtse Weel</text>
<text x="211" y="306" font-family="Liberation Sans" font-size="5.5" fill="#84b574" stroke="#fff" stroke-width="1.6" paint-order="stroke" stroke-linejoin="round" text-anchor="start" transform="rotate(-32 211 306)">Beatrijslaan</text>
<text x="80" y="350" font-family="Liberation Sans" font-size="6.8" fill="#84b574" stroke="#fff" stroke-width="1.6" paint-order="stroke" stroke-linejoin="round" text-anchor="start">Burcht</text>
<text x="312.5" y="224.5" font-family="Liberation Sans" font-size="8.8" fill="#84b574" stroke="#fff" stroke-width="1.6" paint-order="stroke" stroke-linejoin="round" text-anchor="start">Antwerpen</text>
<text x="517" y="281" font-family="Liberation Sans" font-size="7" fill="#84b574" stroke="#fff" stroke-width="1.6" paint-order="stroke" stroke-linejoin="round" text-anchor="start">Borgerhout</text>
<text x="461" y="406" font-family="Liberation Sans" font-size="7" fill="#84b574" stroke="#fff" stroke-width="1.6" paint-order="stroke" stroke-linejoin="round" text-anchor="start">Berchem</text>
<text x="440" y="405" font-family="Liberation Sans" font-size="5.5" fill="#84b574" stroke="#fff" stroke-width="1.6" paint-order="stroke" stroke-linejoin="round" text-anchor="start" transform="rotate(-55 440 405)">Belgiëlei</text>
<circle cx="358.3" cy="221.3" r="5.2" fill="#69a2da"/><path d="M356.5,216.6 A5,5 0 1 1 355.2,225.6 L356.6,223.8 A2.6,2.6 0 1 0 357.4,218.9 Z" fill="#45484b"/>
</svg>
  </div>
  <!-- year selector -->
  <div class="abs" style="left:5px;top:73px;width:49px;height:17px;background:#fff;border-radius:5px"></div>
  <svg class="abs" style="left:11px;top:78px" width="9" height="6" viewBox="0 0 9 6"><path d="M1,1 H8 L4.5,5 Z" fill="#888"/></svg>
  <div class="abs" style="left:23px;top:76px;font-size:9.2px;color:#333;line-height:10px">2024</div>
  <!-- map nav control partly hidden -->
  <div class="abs" style="left:564.5px;top:73px;width:16.5px;height:48.5px;background:#fff;border-radius:3px;box-shadow:0 0 0 1px rgba(0,0,0,0.15)"></div>
  <!-- popup -->
  <div class="abs" style="left:382.5px;top:79px;width:195px;height:161px;background:#fff;border-radius:5px;box-shadow:0 0 0 1px rgba(0,0,0,0.13),0 1px 2px rgba(0,0,0,0.12)"></div>
  <svg class="abs" style="left:470px;top:71px" width="18" height="10" viewBox="0 0 18 10"><path d="M0,9 L9,1 L18,9" stroke="rgba(0,0,0,0.18)" stroke-width="1" fill="#fff"/><rect x="0" y="8.6" width="18" height="1.4" fill="#fff"/></svg>
  <div class="abs" style="left:382px;top:93px;width:196px;text-align:center;font-size:10.4px;color:#444;line-height:11.5px">Toon de resultaten gefilterd op<br>verkeersdrukte.</div>
  <div class="abs" style="left:382px;top:128px;width:196px;height:1px;background:#ddd"></div>
  <div class="abs" style="left:391px;top:138px;font-size:10px;color:#444;line-height:11px">rustig</div>
  <div class="abs" style="left:549px;top:138px;font-size:9.7px;color:#444;line-height:11px">druk</div>
  <div class="abs" style="left:391px;top:157px;width:169px;height:10px;border-radius:5px;background:#f2f2f2;box-shadow:inset 0 0 0 0.6px #ddd"></div>
  <div class="abs" style="left:403px;top:158px;width:85px;height:8px;background:#71ab5e"></div>
  <div class="abs" style="left:391.5px;top:155.5px;width:18px;height:14px;border-radius:3px;background:#fff;box-shadow:0 0 1.5px rgba(0,0,0,0.45)"></div>
  <div class="abs" style="left:479px;top:155.5px;width:19px;height:14px;border-radius:3px;background:#fff;box-shadow:0 0 1.5px rgba(0,0,0,0.45)"></div>
  <svg class="abs" style="left:391px;top:155px" width="110" height="15" viewBox="0 0 110 15"><path d="M9.5,4 V11 M11,4 V11 M97.5,4 V11 M99,4 V11" stroke="#ddd" stroke-width="0.6"/></svg>
  <svg class="abs" style="left:390px;top:171px" width="180" height="25" viewBox="0 0 180 25">
    <g stroke="#555" stroke-width="0.9">
      <path d="M10,2 V10.5"/><path d="M27.6,2 V7"/><path d="M45.2,2 V7"/><path d="M62.8,2 V7"/><path d="M80.4,2 V7"/><path d="M98,2 V7"/><path d="M115.6,2 V7"/><path d="M133.2,2 V7"/><path d="M150.8,2 V7"/><path d="M168.4,2 V10.5"/>
    </g>
    <g font-family="Liberation Sans" font-size="4.6" fill="#aaa" text-anchor="middle">
      <text x="27.6" y="15.5">2</text><text x="45.2" y="15.5">3</text><text x="62.8" y="15.5">4</text><text x="80.4" y="15.5">5</text><text x="98" y="15.5">6</text><text x="115.6" y="15.5">7</text><text x="133.2" y="15.5">8</text><text x="150.8" y="15.5">9</text>
    </g>
    <g font-family="Liberation Sans" font-size="10" fill="#666" text-anchor="middle">
      <text x="10" y="21.3">1</text><text x="168.4" y="21.3">10</text>
    </g>
  </svg>
  <div class="abs" style="left:382px;top:201px;width:196px;height:1px;background:#ddd"></div>
  <div class="abs" style="left:391px;top:210.5px;width:177px;height:21px;border-radius:5px;background:#76ac62;color:#fff;font-size:10px;font-weight:700;text-align:center;line-height:21px">Klaar</div>
  <!-- legend -->
  <div class="abs" style="left:4.8px;top:324.5px;width:48.5px;height:53px;background:#fff;border-radius:5px"></div>
  <svg class="abs" style="left:4.8px;top:324px" width="49" height="54" viewBox="0 0 49 54">
    <defs><linearGradient id="leg" x1="0" y1="0" x2="0" y2="1">
      <stop offset="0" stop-color="#b71c2c"/><stop offset="0.14" stop-color="#d2382c"/><stop offset="0.3" stop-color="#f08a3f"/><stop offset="0.43" stop-color="#f6d07f"/><stop offset="0.53" stop-color="#f6f3e6"/><stop offset="0.63" stop-color="#b3d6ee"/><stop offset="0.8" stop-color="#5a95d0"/><stop offset="1" stop-color="#2c4c9b"/>
    </linearGradient></defs>
    <rect x="0" y="15" width="48.5" height="25.3" fill="url(#leg)"/>
    <g fill="none" stroke="#e0702f" stroke-width="0.7">
      <rect x="2.8" y="4.3" width="9.6" height="5.4"/><path d="M12.4,6 H15 L16.8,8 V9.7 H12.4"/><circle cx="5.2" cy="10.6" r="0.9"/><circle cx="8.2" cy="10.6" r="0.9"/><circle cx="14.8" cy="10.6" r="0.9"/>
      <rect x="19.8" y="4.6" width="10.6" height="5.3" rx="0.8"/><circle cx="22.6" cy="10.6" r="0.9"/><circle cx="28" cy="10.6" r="0.9"/>
      <path d="M33.4,10 V8.2 L35.8,7.4 L37.4,5.4 H41.8 L44,7.4 L45,8 V10 Z"/><circle cx="36.4" cy="10.6" r="0.9"/><circle cx="42.4" cy="10.6" r="0.9"/>
    </g>
    <g fill="none" stroke="#2a6aad" stroke-width="0.75">
      <circle cx="7.4" cy="48" r="2.2"/><circle cx="12.8" cy="48" r="2.2"/><path d="M7.4,48 L9.6,44.8 H12 L12.8,48 M9.6,44.8 L11,48"/>
      <path d="M21.2,44.2 L20.2,47 L21.6,48.3 V50.4 M20.2,47 L18.9,50.4 M20.6,45.4 L22.4,46.3"/>
      <rect x="26.8" y="43.8" width="14.2" height="6.2" rx="1.2"/><path d="M26.8,46.6 H41 M30.4,43.8 V46.6 M34,43.8 V46.6 M37.6,43.8 V46.6"/>
    </g>
    <circle cx="21.6" cy="43.2" r="0.8" fill="#2a6aad"/>
  </svg>
  <div class="abs" style="left:4.8px;top:385.5px;width:48.5px;height:15px;background:#fff;border-radius:5px"></div>
  <svg class="abs" style="left:8px;top:387px" width="10" height="12" viewBox="0 0 10 12"><path d="M1,1 L9,6 L4,7 Z" fill="#1c8fd0"/><path d="M1,1 L4,7 L2,11 Z" fill="#e8492f"/><path d="M4,7 L9,6 L2,11 Z" fill="#f5a623"/></svg>
  <div class="abs" style="left:19px;top:388px;font-size:7.8px;color:#555;line-height:10px;letter-spacing:1.05px">datylon</div>
  <!-- mapbox logo -->
  <svg class="abs" style="left:3px;top:406px" width="50" height="13" viewBox="0 0 50 13">
    <circle cx="6.5" cy="6" r="4.6" fill="#fff" stroke="#777" stroke-width="1.1"/>
    <circle cx="6.5" cy="6" r="2.3" fill="#777"/><circle cx="6.9" cy="5.6" r="1" fill="#fff"/>
    <text x="13.5" y="9.6" font-family="Liberation Sans" font-weight="700" font-size="9.4" fill="#fff" stroke="#777" stroke-width="1.3" paint-order="stroke" stroke-linejoin="round" textLength="34" lengthAdjust="spacingAndGlyphs">mapbox</text>
  </svg>
  <!-- attribution -->
  <div class="abs" style="left:438px;top:413px;width:149px;height:9px;background:rgba(255,255,255,0.5)"></div>
  <div class="abs" style="left:440.5px;top:413.5px;font-size:6.7px;color:#333;line-height:8px;white-space:nowrap">© Mapbox © OpenStreetMap <b style="font-size:6.4px;color:#222">&nbsp;Improve this map</b></div>

  <div id="header">
    <svg class="abs" style="left:0;top:-3px" width="80" height="66" viewBox="0 0 80 66">
      <defs>
        <linearGradient id="lg1" x1="0" y1="0" x2="0.6" y2="1">
          <stop offset="0" stop-color="#72b654"/><stop offset="1" stop-color="#3f8a3a"/>
        </linearGradient>
        <linearGradient id="lg2" x1="0" y1="1" x2="1" y2="0">
          <stop offset="0" stop-color="#3f8c3b"/><stop offset="0.5" stop-color="#6bb24f"/><stop offset="1" stop-color="#5aa446"/>
        </linearGradient>
      </defs>
      <path d="M16.3,29.8 C18.5,27 21,25.3 24,25.2 C26.5,25.1 28.5,25.8 29.8,27.2 C31.5,29 33,31.5 34.2,34 L38.7,45.3 C36,45.6 33,44.6 30.5,42.8 C27,40.2 24,37 21.7,34.9 C19.5,32.9 17.8,31.2 16.3,29.8 Z" fill="url(#lg1)"/>
      <path d="M34,34 C36,31.5 37.8,30 39.5,28.7 C42,26.5 44,23.8 46.5,21.7 C49,19.6 51.5,18 54.2,17.5 C57.5,17 60.5,17.6 63.5,18.2 C61,18.6 59,19.2 57.3,20.2 C54.5,21.8 52.5,23.6 51,25.6 C49,28.3 47.5,30.5 46.5,32.5 C45,35 43.8,37.3 42.6,39.5 C41.5,41.8 40.2,43.8 38.7,45.3 Z" fill="url(#lg2)"/>
      <path d="M38.6,39.5 C40.5,36 42.5,32.5 44.6,29 C47,25.5 49.5,22.5 52,20.6 C53.5,19.6 55,19 56.5,18.6" stroke="#f4faee" stroke-width="0.95" stroke-dasharray="1.5 2.4" fill="none"/>
      <path d="M24.2,27.6 A1.6,1.6 0 0 1 25.6,30.4" stroke="#fff" stroke-width="0.8" fill="none"/>
      <text x="15.6" y="53.6" font-family="Liberation Sans" font-size="8.7" fill="#666" textLength="47.8" lengthAdjust="spacingAndGlyphs">straat<tspan fill="#444">vinken</tspan></text>
    </svg>
    <!-- nav icons -->
    <svg class="abs" style="left:281px;top:18px" width="15" height="15" viewBox="0 0 15 15">
      <circle cx="7.25" cy="7.5" r="6.9" fill="#6aab5a"/>
      <path d="M5,5.6 C5,3.9 6.1,3.1 7.3,3.1 C8.6,3.1 9.6,3.9 9.6,5.1 C9.6,6.5 7.9,6.7 7.9,8.3" stroke="#fff" stroke-width="1.7" fill="none" stroke-linecap="round"/>
      <circle cx="7.8" cy="11" r="1" fill="#fff"/>
    </svg>
    <div class="abs nav" style="left:253px;top:37px;width:70px;color:#6aab5a">Vragen?</div>
    <svg class="abs" style="left:345px;top:18px" width="19" height="15" viewBox="0 0 19 15">
      <circle cx="9.5" cy="5" r="3.1" fill="#6aab5a"/>
      <circle cx="3.6" cy="6.6" r="2.1" fill="#6aab5a"/>
      <circle cx="15.4" cy="6.6" r="2.1" fill="#6aab5a"/>
      <path d="M4.8,14 C4.8,10.5 6.5,9 9.5,9 C12.5,9 14.2,10.5 14.2,14 Z" fill="#6aab5a"/>
      <path d="M0.4,12.5 C0.4,10.2 1.5,9.3 3.3,9.3 C4.2,9.3 4.6,9.5 5,9.8 C4.2,10.8 4,11.5 4,12.5 Z" fill="#6aab5a"/>
      <path d="M18.6,12.5 C18.6,10.2 17.5,9.3 15.7,9.3 C14.8,9.3 14.4,9.5 14,9.8 C14.8,10.8 15,11.5 15,12.5 Z" fill="#6aab5a"/>
    </svg>
    <div class="abs nav" style="left:319px;top:37px;width:70px;color:#6aab5a">Meedoen!</div>
    <svg class="abs" style="left:416px;top:18px" width="19" height="17" viewBox="0 0 19 17">
      <path d="M13.6,5.2 C13.6,3.6 11.9,2.6 9.6,2.6 C7.2,2.6 5.6,3.6 5.6,5.3 C5.6,6.9 7.3,7.5 9.6,8.1 C12,8.7 13.8,9.4 13.8,11.3 C13.8,13.1 12,14.2 9.6,14.2 C7.1,14.2 5.4,13.1 5.4,11.3" stroke="#e0702f" stroke-width="2" fill="none" stroke-linecap="round"/>
      <rect x="1.5" y="7" width="16" height="2" fill="#e0702f"/>
    </svg>
    <div class="abs nav" style="left:390px;top:37px;width:70px;color:#999">Modal split</div>
    <svg class="abs" style="left:481px;top:20px" width="19" height="17" viewBox="0 0 19 17">
      <rect x="0.8" y="11" width="2" height="4.6" fill="#6aab5a"/>
      <rect x="4.4" y="9" width="2" height="6.6" fill="#6aab5a"/>
      <rect x="8" y="6.6" width="2" height="9" fill="#6aab5a"/>
      <rect x="11.6" y="3.6" width="2" height="12" fill="#6aab5a"/>
      <rect x="15.2" y="1" width="2" height="14.6" fill="#6aab5a"/>
    </svg>
    <div class="abs nav" style="left:455px;top:37px;width:70px;color:#999">Drukte</div>
    <svg class="abs" style="left:541px;top:20px" width="17" height="17" viewBox="0 0 17 17">
      <circle cx="6.6" cy="6.4" r="4.6" stroke="#e0702f" stroke-width="2.2" fill="none"/>
      <path d="M10,9.8 L14.8,14.6" stroke="#e0702f" stroke-width="2.8" stroke-linecap="round"/>
    </svg>
    <div class="abs nav" style="left:514px;top:37px;width:70px;color:#999">Zoeken</div>
  </div>

  <div id="topbar"></div>
  <div id="panel"></div>
  <div class="abs" style="left:768px;top:8px;font-size:13px;color:#aaa;font-weight:700;line-height:13px">&#215;</div>
  <div class="abs" style="left:587px;top:22px;width:196px;text-align:center;font-size:13.4px;letter-spacing:0.25px;color:#444;line-height:16px">Minderbroedersrui</div>
  <div class="abs" style="left:588px;top:38px;width:195px;text-align:center;font-size:11.3px;color:#999;line-height:13px">2000 Antwerpen</div>
  <div class="abs" style="left:671px;top:64px;font-size:9.3px;color:#999;line-height:11px">37 <span style="text-decoration:underline">pae</span></div>
  <div class="abs" style="left:611px;top:88.5px;font-size:19.2px;color:#e0702f;line-height:21px">18%</div>
  <div class="abs" style="left:721px;top:88.5px;font-size:19.2px;color:#2a6aad;line-height:21px">82%</div>
  <div class="abs" style="left:661px;top:95px;width:49px;height:21px;border-radius:4px;background:#2a6aad;overflow:hidden"><div style="width:9px;height:21px;background:#e0702f"></div></div>
  <!-- small icons under 18% -->
  <svg class="abs" style="left:602px;top:112px" width="55" height="10" viewBox="0 0 55 10">
    <g fill="none" stroke="#e0702f" stroke-width="0.8">
      <rect x="1" y="1" width="11" height="6"/><path d="M12,3 H15 L17,5 V7 H12"/><circle cx="4" cy="8" r="1.2"/><circle cx="8" cy="8" r="1.2"/><circle cx="15" cy="8" r="1.2"/>
      <rect x="24" y="1.5" width="12" height="5.5" rx="1"/><circle cx="27" cy="8" r="1.2"/><circle cx="33" cy="8" r="1.2"/>
      <path d="M41,7 V5 L44,4 L46,2 H51 L53,4.5 V7 Z"/><circle cx="44" cy="8" r="1.2"/><circle cx="50.5" cy="8" r="1.2"/>
    </g>
  </svg>
  <svg class="abs" style="left:717px;top:111px" width="48" height="11" viewBox="0 0 48 11">
    <g fill="none" stroke="#2a6aad" stroke-width="0.8">
      <circle cx="4" cy="7" r="2.6"/><circle cx="11" cy="7" r="2.6"/><path d="M4,7 L6.5,3 H10 L11,7 M6.5,3 L8,7 L10,3"/>
      <path d="M19,2.5 L18,6 L20,7.5 L20,10 M18,6 L16.5,10 M18.5,4 L20.5,5"/><circle cx="19.5" cy="1.5" r="0.9" fill="#2a6aad"/>
      <rect x="26" y="1" width="20" height="8" rx="1.5"/><path d="M26,5 H46 M31,1 V5 M36,1 V5 M41,1 V5"/><circle cx="30" cy="9.3" r="1"/><circle cx="42" cy="9.3" r="1"/>
    </g>
  </svg>
  <!-- bars -->
  <div class="abs" style="left:641px;top:142px;width:100px;height:13px;border-radius:6.5px;background:#e5e5e5"></div>
  <div class="abs" style="left:641px;top:162px;width:100px;height:13px;border-radius:6.5px;background:#e5e5e5;overflow:hidden"><div style="width:2px;height:13px;background:#e0702f"></div></div>
  <div class="abs" style="left:641px;top:182px;width:100px;height:13px;border-radius:6.5px;background:#e5e5e5;overflow:hidden"><div style="width:17px;height:13px;background:#e0702f"></div></div>
  <div class="abs" style="left:641px;top:202px;width:100px;height:13px;border-radius:6.5px;background:#e5e5e5"></div>
  <div class="abs" style="left:641px;top:222px;width:100px;height:13px;border-radius:6.5px;background:#e5e5e5;overflow:hidden"><div style="width:21px;height:13px;background:#2a6aad"></div></div>
  <div class="abs" style="left:641px;top:242px;width:100px;height:13px;border-radius:6.5px;background:#e5e5e5;overflow:hidden"><div style="width:62px;height:13px;background:#2a6aad"></div></div>
  <div class="abs" style="left:740px;top:142px;width:29px;text-align:right;font-size:10px;color:#444;line-height:13px">0</div>
  <div class="abs" style="left:740px;top:162px;width:29px;text-align:right;font-size:10px;color:#444;line-height:13px">2</div>
  <div class="abs" style="left:740px;top:182px;width:29px;text-align:right;font-size:10px;color:#444;line-height:13px">35</div>
  <div class="abs" style="left:740px;top:202px;width:29px;text-align:right;font-size:10px;color:#444;line-height:13px">0</div>
  <div class="abs" style="left:740px;top:222px;width:29px;text-align:right;font-size:10px;color:#444;line-height:13px">43</div>
  <div class="abs" style="left:740px;top:242px;width:29px;text-align:right;font-size:10px;color:#444;line-height:13px">129</div>
  <!-- row icons -->
  <svg class="abs" style="left:604px;top:140px" width="30" height="120" viewBox="0 0 30 120">
    <!-- truck -->
    <rect x="2" y="3" width="16" height="9" fill="#8a5a2b" stroke="#555" stroke-width="0.6"/>
    <path d="M18,6 H23 L26,9 V13 H18 Z" fill="#fff" stroke="#555" stroke-width="0.7"/>
    <rect x="2" y="12" width="24" height="1.2" fill="#555"/>
    <circle cx="6" cy="14" r="1.6" fill="#fff" stroke="#555" stroke-width="0.7"/><circle cx="10" cy="14" r="1.6" fill="#fff" stroke="#555" stroke-width="0.7"/><circle cx="22" cy="14" r="1.6" fill="#fff" stroke="#555" stroke-width="0.7"/>
    <!-- van -->
    <path d="M2,23 H22 L24,26 V33 H2 Z" fill="#6cb8ec" stroke="#334" stroke-width="0.7"/>
    <rect x="18" y="24" width="4" height="3" fill="#fff"/>
    <circle cx="7" cy="33.5" r="2" fill="#fff" stroke="#334" stroke-width="0.7"/><circle cx="19" cy="33.5" r="2" fill="#fff" stroke="#334" stroke-width="0.7"/>
    <!-- car -->
    <path d="M2,50 V46 L6,45 L9,42 H18 L22,45 L25,46 V50 Z" fill="#ef7f3f" stroke="#444" stroke-width="0.7"/>
    <path d="M9.5,43.5 H13 V45.5 H7.5 Z M14,43.5 H17.5 L20,45.5 H14 Z" fill="#fff"/>
    <circle cx="7" cy="50.5" r="2" fill="#fff" stroke="#444" stroke-width="0.7"/><circle cx="20" cy="50.5" r="2" fill="#fff" stroke="#444" stroke-width="0.7"/>
    <!-- bus -->
    <rect x="2" y="62" width="23" height="11" rx="1.2" fill="#e8552d" stroke="#555" stroke-width="0.7"/>
    <rect x="3.5" y="64" width="20" height="4" fill="#fff"/>
    <path d="M10,64 V72 M17,64 V72" stroke="#555" stroke-width="0.6"/>
    <circle cx="7" cy="73.5" r="1.8" fill="#fff" stroke="#555" stroke-width="0.7"/><circle cx="20" cy="73.5" r="1.8" fill="#fff" stroke="#555" stroke-width="0.7"/>
    <!-- bike -->
    <g fill="none" stroke="#444" stroke-width="0.8">
      <circle cx="8" cy="90.5" r="3.6"/><circle cx="20" cy="90.5" r="3.6"/>
      <path d="M8,90.5 L11.5,85 H17.5 L20,90.5 M11.5,85 L14,90.5 L17.5,85 M10.5,83.5 H13 M17,83 H19"/>
    </g>
    <circle cx="8" cy="90.5" r="1.2" fill="#6aab5a"/>
    <!-- walker -->
    <g fill="none" stroke="#444" stroke-width="1">
      <path d="M14.5,103.5 L13,108 L15.5,110 L15.5,114 M13,108 L10.5,113.5 M13.8,105 L16.5,106.5 M13.8,105 L11.5,107"/>
    </g>
    <circle cx="15.3" cy="102" r="1.2" fill="#444"/>
  </svg>
  <!-- street view -->
  <div class="abs" style="left:589px;top:289px;width:193px;height:3px;background:#e6e6e6"></div>
  <div id="sv" class="abs" style="left:589px;top:292px;width:193px;height:131px;overflow:hidden;background:#8fa3b8">
    <svg width="193" height="131" viewBox="0 0 193 131">
      <defs>
        <linearGradient id="sky" x1="0" y1="0" x2="1" y2="1"><stop offset="0" stop-color="#6f9fd8"/><stop offset="0.6" stop-color="#c9dbec"/><stop offset="1" stop-color="#e8eef3"/></linearGradient>
        <linearGradient id="fac" x1="0" y1="0" x2="1" y2="0"><stop offset="0" stop-color="#b8bcc0"/><stop offset="1" stop-color="#cfd0cd"/></linearGradient>
      </defs>
      <rect width="193" height="131" fill="url(#sky)"/>
      <path d="M118,8 C128,0 140,10 150,5 C160,0 172,12 182,8 L188,45 C170,50 155,42 140,48 L110,50 Z" fill="#f1f4f7" opacity="0.9"/>
      <path d="M100,40 C110,34 122,44 128,40 L128,95 H100 Z" fill="#e9eef2"/>
      <path d="M70,0 L105,40 M90,0 L110,30" stroke="#333" stroke-width="0.6"/>
      <!-- left facade -->
      <path d="M0,0 H84 L84,30 L106,36 V105 L0,100 Z" fill="url(#fac)"/>
      <rect x="0" y="0" width="100" height="6" fill="#7291b8"/>
      <g fill="#48536a">
        <path d="M2,10 H18 V40 H2 Z"/><path d="M24,12 H38 V44 H24 Z"/><path d="M44,16 H56 V48 H44 Z"/>
        <path d="M60,20 H70 V52 H60 Z"/><path d="M74,24 H82 V56 H74 Z"/>
      </g>
      <g fill="#8ea6c6" opacity="0.7"><rect x="5" y="13" width="5" height="12"/><rect x="27" y="15" width="4" height="12"/><rect x="47" y="19" width="3" height="12"/><rect x="62" y="23" width="3" height="10"/></g>
      <path d="M0,42 H100" stroke="#a0a4a8" stroke-width="1.5"/>
      <!-- beige building -->
      <path d="M84,30 L106,36 V104 H84 Z" fill="#c3bb9f"/>
      <g fill="#5a584f"><rect x="87" y="40" width="4" height="10"/><rect x="94" y="42" width="4" height="10"/><rect x="100" y="44" width="3" height="10"/><rect x="87" y="60" width="4" height="10"/><rect x="94" y="62" width="4" height="10"/><rect x="100" y="63" width="3" height="10"/></g>
      <path d="M106,40 L118,50 V100 H106 Z" fill="#aab3bf"/>
      <!-- ivy -->
      <path d="M0,50 C8,46 18,47 30,52 C45,56 58,62 70,68 C80,73 92,80 104,86 L106,108 C92,106 80,102 68,99 C52,95 38,90 25,89 C15,88 8,90 0,91 Z" fill="#416b2e"/>
      <path d="M3,54 C12,50 22,52 34,57 C26,63 14,64 3,62 Z" fill="#577f3e"/>
      <path d="M38,60 C50,62 60,68 70,74 C62,79 50,76 40,70 Z" fill="#52793b"/>
      <path d="M72,78 C82,82 90,86 100,92 C92,96 82,92 74,87 Z" fill="#507839"/>
      <path d="M14,72 C22,70 30,74 36,80 C28,84 18,82 12,78 Z" fill="#557d3d"/>
      <path d="M8,88 C12,100 14,112 10,124 L4,124 C7,112 6,100 8,88 Z" fill="#3b6030"/>
      <!-- shops under ivy -->
      <path d="M0,90 C20,88 50,92 68,99 L104,106 V114 L0,116 Z" fill="#4f4e4b"/>
      <g fill="#8d9399" opacity="0.55"><rect x="14" y="96" width="12" height="14"/><rect x="30" y="97" width="14" height="13"/><rect x="64" y="102" width="12" height="9"/></g>
      <path d="M0,114 L104,110 V118 L0,122 Z" fill="#b9b9b7"/>
      <!-- tower -->
      <rect x="127" y="34" width="14" height="40" fill="#d9d7d2"/>
      <path d="M126,37 C126,28 130,25 134,23 C138,25 142,28 142,37 Z" fill="#cfcdc8"/>
      <rect x="133" y="16" width="2" height="8" fill="#bbb"/>
      <g fill="#8f949a"><rect x="131" y="42" width="6" height="8"/><rect x="131" y="56" width="6" height="8"/></g>
      <!-- right building -->
      <path d="M126,62 L140,50 H186 L193,48 V105 H126 Z" fill="#e4e2dd"/>
      <path d="M126,62 L140,50 H186 L193,48 V62 H126 Z" fill="#5a5f66"/>
      <g fill="#5a6068"><rect x="132" y="68" width="5" height="8"/><rect x="142" y="68" width="5" height="8"/><rect x="152" y="68" width="5" height="8"/><rect x="162" y="68" width="5" height="8"/><rect x="132" y="82" width="5" height="8"/><rect x="142" y="82" width="5" height="8"/><rect x="152" y="82" width="5" height="8"/></g>
      <rect x="126" y="93" width="67" height="13" fill="#3f4247"/>
      <rect x="186" y="0" width="7" height="112" fill="#5d4a3c"/>
      <path d="M108,55 L118,58 V98 H108 Z" fill="#b4b9c1"/>
      <path d="M100,98 H126 V104 H100 Z" fill="#8aa0b8"/>
      <!-- street -->
      <path d="M60,131 L104,104 L126,104 L193,110 V131 Z" fill="#6e7072"/>
      <path d="M0,122 L104,110 L60,131 H0 Z" fill="#8b8c8d"/>
      <path d="M106,106 L116,131 H111 Z" fill="#d0d0d0" opacity="0.6"/>
      <path d="M140,108 C148,105 160,106 162,111 V121 H142 Z" fill="#e9ebec"/>
    </svg>
    <div class="abs" style="left:0;top:5px;width:98px;height:30px;background:rgba(50,50,50,0.85)"></div>
    <div class="abs" style="left:8px;top:7px;font-size:6.2px;font-weight:700;color:#fff;line-height:8px;white-space:nowrap">68 Minderbroedersrui</div>
    <div class="abs" style="left:4.5px;top:16px;font-size:5.9px;color:#ddd;line-height:8px;white-space:nowrap">Antwerpen, Vlaams Gewest</div>
    <div class="abs" style="left:4.5px;top:24px;font-size:5.9px;color:#9cc4ff;line-height:8px;white-space:nowrap">Weergeven op Google Maps</div>
    <svg class="abs" style="left:85px;top:14px" width="8" height="12" viewBox="0 0 8 12"><path d="M4,11 L1,5.5 A3.2,3.2 0 1 1 7,5.5 Z" fill="#ddd"/><circle cx="4" cy="4.2" r="1.2" fill="#444"/></svg>
    <div class="abs" style="left:165.8px;top:4.5px;width:20.7px;height:21.5px;background:rgba(48,48,48,0.92)"></div>
    <svg class="abs" style="left:165.8px;top:4.5px" width="21" height="22" viewBox="0 0 21 22"><path d="M5,8.5 V5.5 H8 M13,5.5 H16 V8.5 M16,13.5 V16.5 H13 M8,16.5 H5 V13.5" stroke="#ddd" stroke-width="1.3" fill="none"/></svg>
    <div class="abs" style="left:161.3px;top:30.5px;width:26.6px;height:26.6px;border-radius:13.3px;background:#262626"></div>
    <svg class="abs" style="left:161.3px;top:30.5px" width="27" height="27" viewBox="0 0 27 27"><circle cx="13.3" cy="13.3" r="7.5" fill="#5a5a5a"/><path d="M16.5,6.5 L14.8,14.2 L11.8,12.6 Z" fill="#eee"/><path d="M11.8,12.6 L14.8,14.2 L10,20.5 Z" fill="#e8302a"/><path d="M5.5,10 A8.5,8.5 0 0 0 5.5,16.6 M21.1,10 A8.5,8.5 0 0 1 21.1,16.6" stroke="#bbb" stroke-width="1.1" fill="none"/><path d="M4.3,16 L5.5,17.6 L6.8,16 M19.8,16 L21.1,17.6 L22.4,16" stroke="#bbb" stroke-width="0.9" fill="none"/></svg>
    <div class="abs" style="left:163.4px;top:73.3px;width:21.6px;height:45.7px;background:rgba(48,48,48,0.92)"></div>
    <div class="abs" style="left:167.5px;top:95.5px;width:13.5px;height:0.7px;background:#888"></div>
    <svg class="abs" style="left:163.4px;top:73.3px" width="22" height="46" viewBox="0 0 22 46"><path d="M10.8,6.5 V16.5 M5.8,11.5 H15.8 M5.8,34.5 H15.8" stroke="#ddd" stroke-width="1.5"/></svg>
    <div class="abs" style="left:5px;top:115px;font-size:10px;color:#fff;font-weight:700;line-height:12px;text-shadow:0 0 2px #000">Google</div>
    <div class="abs" style="left:51px;top:122px;width:142px;height:9px;background:rgba(30,30,30,0.85)"></div>
    <div class="abs" style="left:54px;top:122.5px;font-size:5.8px;color:#ddd;line-height:8px;white-space:nowrap">&#9000; &nbsp;© 2025 Google &nbsp;Voorwaarden &nbsp;Probleem melden</div>
  </div>

</div>
</body></html>
